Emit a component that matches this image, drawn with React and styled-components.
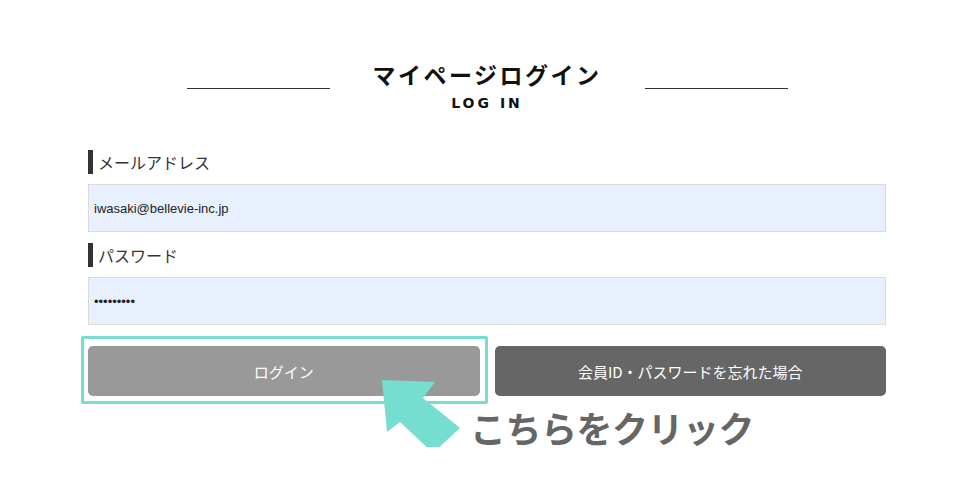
import styled, { createGlobalStyle } from "styled-components";

const GlobalStyle = createGlobalStyle`
  body {
    margin: 0;
    background: #fff;
    font-family: "Liberation Sans", "Noto Sans CJK JP", sans-serif;
    color: #333;
  }
`;

// Page header with side rules
const Page = styled.div`
  width: 798px;
  margin-left: 88px;
  padding-top: 59px;
`;
const HeadRow = styled.div`
  display: flex;
  justify-content: center;
  align-items: flex-start;
`;
const Rule = styled.div`
  width: 143px;
  height: 1px;
  margin-top: 29px;
  background: #333;
`;
const TitleBlock = styled.div`
  width: 315px;
  text-align: center;
`;
const Title = styled.h1`
  margin: 0;
  font-family: "Noto Sans CJK JP", sans-serif;
  font-size: 23px;
  line-height: 30px;
  font-weight: 700;
  letter-spacing: 2.5px;
  color: #111;
`;
const Sub = styled.div`
  margin-top: 5px;
  font-family: "DejaVu Sans", sans-serif;
  font-size: 14px;
  line-height: 18px;
  font-weight: 700;
  letter-spacing: 3px;
  color: #111;
`;

// Form
const Form = styled.form`
  margin-top: 38px;
  display: flex;
  flex-direction: column;
`;
const Label = styled.label`
  display: flex;
  align-items: center;
  height: 24px;
  margin-top: ${(p) => (p.$first ? "0" : "11px")};
  padding-left: 5px;
  border-left: 5px solid #333;
  font-family: "Noto Sans CJK JP", sans-serif;
  font-size: 16px;
  color: #333;
`;
const Input = styled.input`
  box-sizing: border-box;
  width: 100%;
  height: 48px;
  margin-top: 10px;
  padding: 0 5px;
  border: 1px solid #dadada;
  background: #e8f0fe;
  font-family: "Liberation Sans", sans-serif;
  font-size: 13px;
  color: #222;
  outline: none;
`;

// Buttons
const ButtonRow = styled.div`
  position: relative;
  display: flex;
  gap: 15px;
  margin-top: 21px;
`;
const Button = styled.button`
  flex: 1;
  height: 50px;
  border: none;
  border-radius: 5px;
  background: ${(p) => (p.$dark ? "#666" : "#999")};
  color: #fff;
  font-family: "Noto Sans CJK JP", sans-serif;
  font-size: 15px;
  cursor: pointer;
`;

// Annotation overlay
const Frame = styled.div`
  position: absolute;
  left: -7px;
  top: -10px;
  width: 407px;
  height: 68px;
  box-sizing: border-box;
  border: 3px solid #75ded1;
  border-radius: 2px;
  pointer-events: none;
`;
const Arrow = styled.svg`
  position: absolute;
  left: 292px;
  top: 32px;
  pointer-events: none;
`;
const Note = styled.div`
  margin-top: 11px;
  padding-left: 382px;
  font-family: "Noto Sans CJK JP", sans-serif;
  font-size: 36px;
  line-height: 40px;
  font-weight: 700;
  color: #666;
  letter-spacing: -0.5px;
`;

export default function App() {
  return (
    <>
      <GlobalStyle />
      <Page>
        <HeadRow>
          <Rule />
          <TitleBlock>
            <Title>マイページログイン</Title>
            <Sub>LOG IN</Sub>
          </TitleBlock>
          <Rule />
        </HeadRow>
        <Form onSubmit={(e) => e.preventDefault()}>
          <Label $first>メールアドレス</Label>
          <Input type="text" defaultValue="iwasaki@bellevie-inc.jp" readOnly />
          <Label>パスワード</Label>
          <Input type="password" defaultValue="123456789" readOnly />
          <ButtonRow>
            <Button type="submit">ログイン</Button>
            <Button type="button" $dark>
              会員ID・パスワードを忘れた場合
            </Button>
            <Frame />
            <Arrow width="84" height="80" viewBox="0 0 84 80">
              <polygon
                points="2,2 55,4 43,20 80,50 53,75 20,44 7,54"
                fill="#75ded1"
              />
            </Arrow>
          </ButtonRow>
        </Form>
        <Note>こちらをクリック</Note>
      </Page>
    </>
  );
}
